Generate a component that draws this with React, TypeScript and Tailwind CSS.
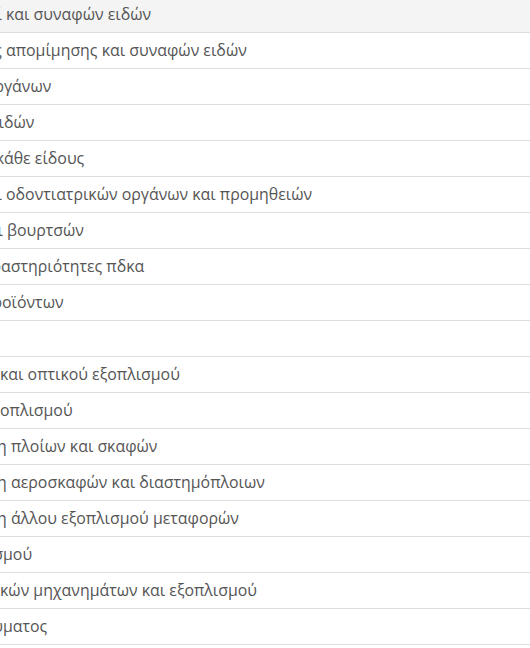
type Row = { pre: string; text: string; lead: string };

// lead = width of the cut-off left part; the hidden words sit right-aligned in it
const rows: Row[] = [
  { pre: "μπιζουτερί\u00a0", text: "και συναφών ειδών", lead: "w-[6px]" },
  { pre: "κοσμηματοποιίας\u00a0", text: "απομίμησης και συναφών ειδών", lead: "w-[6px]" },
  { pre: "μουσικών ορ", text: "γάνων", lead: "w-[4px]" },
  { pre: "αθλητικών ει", text: "δών", lead: "w-[4px]" },
  { pre: "παιχνιδιών κ", text: "άθε είδους", lead: "w-[4px]" },
  { pre: "ιατρικών και\u00a0", text: "οδοντιατρικών οργάνων και προμηθειών", lead: "w-[6px]" },
  { pre: "σκουπών και\u00a0", text: "βουρτσών", lead: "w-[7px]" },
  { pre: "μεταποιητικές δρ", text: "αστηριότητες πδκα", lead: "w-[1px]" },
  { pre: "μεταλλικών πρ", text: "οϊόντων", lead: "w-[2px]" },
  { pre: "", text: "", lead: "w-0" },
  { pre: "ηλεκτρονικού\u00a0", text: "και οπτικού εξοπλισμού", lead: "w-0" },
  { pre: "ηλεκτρολογικού εξ", text: "οπλισμού", lead: "w-0" },
  { pre: "συντήρηση\u00a0", text: "πλοίων και σκαφών", lead: "w-[11px]" },
  { pre: "συντήρηση\u00a0", text: "αεροσκαφών και διαστημόπλοιων", lead: "w-[11px]" },
  { pre: "συντήρηση\u00a0", text: "άλλου εξοπλισμού μεταφορών", lead: "w-[11px]" },
  { pre: "άλλου εξοπλισ", text: "μού", lead: "w-[3px]" },
  { pre: "βιομηχανι", text: "κών μηχανημάτων και εξοπλισμού", lead: "w-0" },
  { pre: "ηλεκτρικού ρεύ", text: "ματος", lead: "w-[3px]" },
];

export default function App() {
  return (
    <div className="w-[530px] h-[648px] overflow-hidden bg-white font-['Open_Sans',sans-serif] text-[15.9px] text-[#555]">
      <div className="-mt-[3px] flex flex-col">
        {rows.map((r, i) => (
          <div
            key={i}
            className={`h-9 flex items-center overflow-hidden border-b border-[#dddddd] whitespace-nowrap ${i === 0 ? "bg-[#f4f4f4]" : ""}`}
          >
            <div className={`${r.lead} shrink-0 flex justify-end`}>
              <span className="shrink-0">{r.pre}</span>
            </div>
            <span>{r.text}</span>
          </div>
        ))}
      </div>
    </div>
  );
}
